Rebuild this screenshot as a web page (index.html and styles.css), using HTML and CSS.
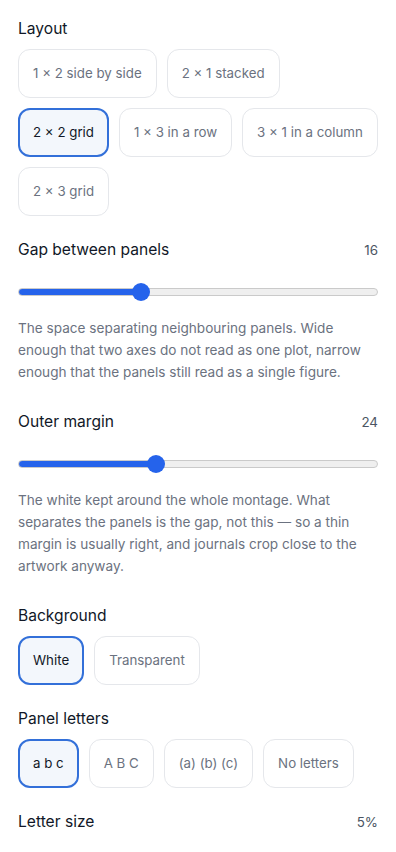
FILE: index.html
```html
<!DOCTYPE html>
<html lang="en">
<head>
    <meta charset="UTF-8">
    <meta name="viewport" content="width=device-width, initial-scale=1.0">
    <title>Montage settings</title>
    <link rel="stylesheet" href="styles.css">
</head>
<body>
    <div class="panel">
        <section class="field">
            <div class="field-head"><span class="field-label">Layout</span></div>
            <div class="choices">
                <button class="choice">1 × 2 side by side</button>
                <button class="choice">2 × 1 stacked</button>
                <button class="choice selected">2 × 2 grid</button>
                <button class="choice">1 × 3 in a row</button>
                <button class="choice">3 × 1 in a column</button>
                <button class="choice">2 × 3 grid</button>
            </div>
        </section>

        <section class="field">
            <div class="field-head">
                <span class="field-label">Gap between panels</span>
                <span class="field-value">16</span>
            </div>
            <input class="slider" type="range" min="0" max="48" value="16" style="--fill: 123px">
            <p class="hint">The space separating neighbouring panels. Wide enough that two axes do not read as one plot, narrow enough that the panels still read as a single figure.</p>
        </section>

        <section class="field">
            <div class="field-head">
                <span class="field-label">Outer margin</span>
                <span class="field-value">24</span>
            </div>
            <input class="slider" type="range" min="0" max="64" value="24" style="--fill: 137px">
            <p class="hint">The white kept around the whole montage. What separates the panels is the gap, not this — so a thin margin is usually right, and journals crop close to the artwork anyway.</p>
        </section>

        <section class="field">
            <div class="field-head"><span class="field-label">Background</span></div>
            <div class="choices">
                <button class="choice selected">White</button>
                <button class="choice">Transparent</button>
            </div>
        </section>

        <section class="field">
            <div class="field-head"><span class="field-label">Panel letters</span></div>
            <div class="choices">
                <button class="choice selected">a b c</button>
                <button class="choice">A B C</button>
                <button class="choice">(a) (b) (c)</button>
                <button class="choice">No letters</button>
            </div>
        </section>

        <section class="field">
            <div class="field-head">
                <span class="field-label">Letter size</span>
                <span class="field-value">5%</span>
            </div>
        </section>
    </div>
</body>
</html>
```

FILE: styles.css
```css
body {
    font-family: Inter, "Noto Sans", sans-serif;
    background-color: #ffffff;
    color: #111827;
    margin: 0;
}
.panel {
    padding: 19px 18px 0;
    display: flex;
    flex-direction: column;
    gap: 24px;
}
.field {
    display: flex;
    flex-direction: column;
}
.field-head {
    display: flex;
    justify-content: space-between;
    align-items: baseline;
    line-height: 20px;
}
.field-label {
    font-size: 15.6px;
    font-weight: 400;
    color: #111827;
}
.field-value {
    font-size: 13.4px;
    color: #4b5563;
}
.choices {
    display: flex;
    flex-wrap: wrap;
    gap: 10px;
    margin-top: 10px;
}
.choice {
    font-family: inherit;
    font-size: 13.3px;
    line-height: 19px;
    color: #6b7280;
    background-color: #ffffff;
    border: 1px solid #e5e7eb;
    border-radius: 12px;
    padding: 14px 14px;
    cursor: pointer;
}
.choice.selected {
    color: #111827;
    background-color: #f3f7fc;
    border: 2px solid #3370d9;
    padding: 13px 13px;
}
.slider {
    -webkit-appearance: none;
    appearance: none;
    width: 100%;
    height: 8px;
    margin: 28px 0 5px;
    border: 1px solid #cacaca;
    border-radius: 4px;
    background: linear-gradient(to right, #2563eb var(--fill), #efefef var(--fill));
    box-sizing: border-box;
}
.slider::-webkit-slider-thumb {
    -webkit-appearance: none;
    appearance: none;
    width: 18px;
    height: 18px;
    border: none;
    border-radius: 50%;
    background-color: #2563eb;
    cursor: pointer;
}
.hint {
    margin: 16px 0 5px;
    font-size: 13.6px;
    line-height: 22px;
    color: #6b7280;
}
```
